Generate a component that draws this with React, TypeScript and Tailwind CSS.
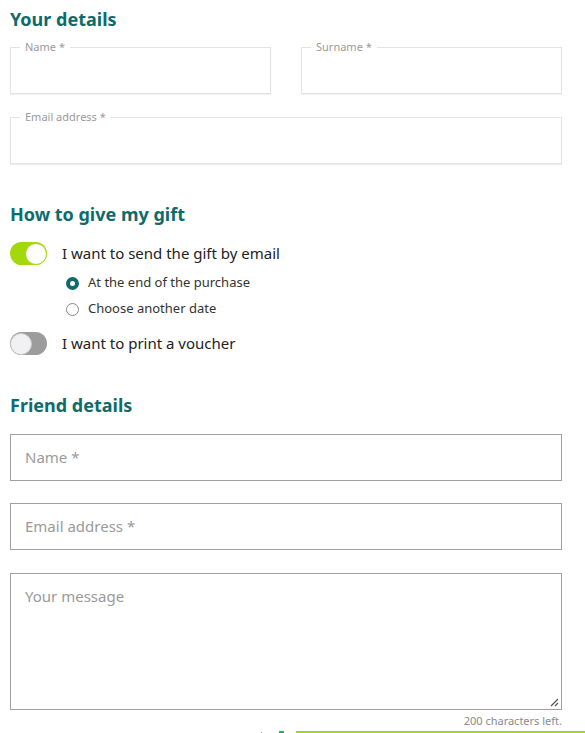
import React from 'react'

const font = { fontFamily: '"Noto Sans", "Open Sans", sans-serif' }

function Outlined({ label, className }: { label: string; className?: string }) {
  return (
    <div className={`relative h-[47px] border border-[#e3e3e3] shadow-[0_1px_1px_rgba(0,0,0,0.06)] ${className ?? ''}`}>
      <span className="absolute -top-[8px] left-[9px] bg-white px-[5px] text-[11px] leading-[14px] text-[#9a9a9a]">
        {label}
      </span>
    </div>
  )
}

function Toggle({ on }: { on: boolean }) {
  return (
    <div
      className={`flex h-[23px] w-[37px] shrink-0 items-center rounded-full ${
        on ? 'justify-end bg-[#a3d80c]' : 'justify-start bg-[#9c9c9c]'
      }`}
    >
      <div
        className={`h-[22px] w-[22px] rounded-full border ${
          on ? 'border-[#a3d80c] bg-white' : 'border-[#c9c9c9] bg-[#f1f1f4]'
        }`}
      />
    </div>
  )
}

function Radio({ checked, label }: { checked: boolean; label: string }) {
  return (
    <div className="flex h-[26px] items-center gap-[9px] pl-[56px]">
      {checked ? (
        <span className="h-[13px] w-[13px] rounded-full border-[4px] border-[#0e6b6c] bg-white" />
      ) : (
        <span className="h-[13px] w-[13px] rounded-full border border-[#8a8a8a] bg-white" />
      )}
      <span className="text-[13px] text-[#333]">{label}</span>
    </div>
  )
}

export default function App() {
  return (
    <div className="min-h-[733px] bg-white" style={font}>
      <div className="ml-[10px] w-[552px]">
        <h2 className="pt-[7px] text-[18px] font-bold leading-[24px] text-[#0e6b6c]">Your details</h2>

        <div className="mt-[16px] flex gap-[30px]">
          <Outlined label="Name *" className="w-[261px]" />
          <Outlined label="Surname *" className="w-[261px]" />
        </div>
        <Outlined label="Email address *" className="mt-[23px]" />

        <h2 className="mt-[38px] text-[18px] font-bold leading-[24px] text-[#0e6b6c]">How to give my gift</h2>

        <div className="mt-[16px] flex items-center gap-[15px]">
          <Toggle on />
          <span className="text-[15px] text-[#222]">I want to send the gift by email</span>
        </div>
        <div className="mt-[5px]">
          <Radio checked label="At the end of the purchase" />
          <Radio checked={false} label="Choose another date" />
        </div>
        <div className="mt-[10px] flex items-center gap-[15px]">
          <Toggle on={false} />
          <span className="text-[15px] text-[#222]">I want to print a voucher</span>
        </div>

        <h2 className="mt-[38px] text-[18px] font-bold leading-[24px] text-[#0e6b6c]">Friend details</h2>

        <div className="mt-[17px] flex h-[47px] items-center border border-[#a0a0a0] px-[14px] text-[15px] text-[#9a9a9a]">
          Name *
        </div>
        <div className="mt-[22px] flex h-[47px] items-center border border-[#a0a0a0] px-[14px] text-[15px] text-[#9a9a9a]">
          Email address *
        </div>
        <div className="relative mt-[23px] h-[137px] border border-[#a0a0a0] px-[14px] pt-[11px] text-[15px] text-[#9a9a9a]">
          Your message
          <svg className="absolute bottom-[2px] right-[2px]" width="9" height="9" viewBox="0 0 9 9">
            <path d="M8 1 L1 8 M8 5 L5 8" stroke="#555" strokeWidth="1.2" />
          </svg>
        </div>
        <div className="mt-[4px] text-right text-[11px] leading-[14px] text-[#8a8a8a]">200 characters left.</div>
      </div>
      <div className="mt-[3px] flex h-[2px] items-center">
        <div className="ml-[261px] h-[1px] w-[1px] bg-[#888]" />
        <div className="ml-[17px] h-[2px] w-[5px] bg-[#1eb55a]" />
        <div className="ml-[12px] h-[2px] flex-1 bg-[#a3d80c]" />
      </div>
    </div>
  )
}
